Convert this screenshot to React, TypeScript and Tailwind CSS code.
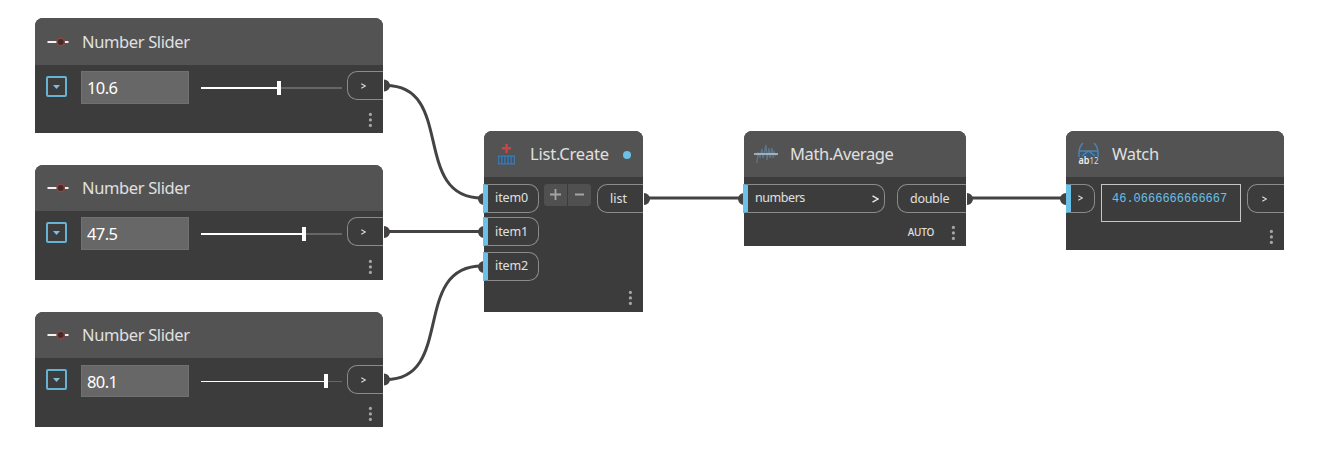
import React from "react";
import clsx from "clsx";

type NodeProps = {
  title: string;
  icon: React.ReactNode;
  place: string;
  header?: string;
  titleStyle?: string;
  badge?: boolean;
  children: React.ReactNode;
};

function GraphNode({ title, icon, place, header = "h-[46px]", titleStyle = "", badge, children }: NodeProps) {
  return (
    <section className={clsx("absolute flex flex-col overflow-hidden rounded-t-lg bg-[#3c3c3c] text-[#e0e0e0]", place)}>
      <header className={clsx("flex shrink-0 items-center bg-[#535353]", header)}>
        {icon}
        <h2 className={clsx("whitespace-nowrap text-[16.5px] leading-none", titleStyle)}>{title}</h2>
        {badge && <span className="ml-auto mr-3 mt-0.5 size-2 rounded-full bg-[#6ac0e7]" />}
      </header>
      {children}
    </section>
  );
}

function Dots({ className = "" }: { className?: string }) {
  return (
    <svg className={clsx("h-4 w-1 shrink-0", className)} viewBox="0 0 4 16" fill="#a6a6a6">
      <circle cx="2.4" cy="2.4" r="1.6" />
      <circle cx="2.4" cy="7.9" r="1.6" />
      <circle cx="2.4" cy="13.4" r="1.6" />
    </svg>
  );
}

function InputPort({ children, className }: { children: React.ReactNode; className: string }) {
  return (
    <div className={clsx("flex h-[29px] shrink-0 items-center rounded-r-[10px] border border-[#8b8b8b] border-l-[#6ac0e7] text-[12.5px] leading-none", className)}>
      {children}
    </div>
  );
}

function OutputPort({ children, className }: { children: React.ReactNode; className: string }) {
  return (
    <div className={clsx("flex h-[29px] shrink-0 items-center rounded-l-[10px] border border-r-0 border-[#8b8b8b] text-[12.5px] leading-none", className)}>
      {children}
    </div>
  );
}

function Chevron({ large = false }: { large?: boolean }) {
  return large ? (
    <svg className="mt-0.5 h-2 w-[7px]" viewBox="0 0 7 8" fill="none" stroke="#e8e8e8" strokeWidth="1.4">
      <path d="M.5 .8 6 4 .5 7.2" />
    </svg>
  ) : (
    <svg className="h-1.5 w-[5px]" viewBox="0 0 5 6" fill="none" stroke="#e0e0e0" strokeWidth="1.1">
      <path d="M.3 .7 4.5 3 .3 5.3" />
    </svg>
  );
}

const sliderIcon = (
  <svg className="ml-3 mr-[13px] h-3 w-[22px] shrink-0" viewBox="0 0 22 12">
    <path d="M.5 6h21" stroke="#f2f2f2" strokeWidth="2.2" />
    <circle cx="13.7" cy="6" r="3.7" fill="#442c2c" stroke="#92463f" strokeWidth="1.4" />
  </svg>
);

const listIcon = (
  <svg className="ml-3.5 mr-[15px] h-[22px] w-[17px] shrink-0" viewBox="0 0 17 22" fill="none">
    <path d="M0 13h17v8H0z" fill="#46525e" />
    <path d="M8.5 1v9M4 5.3h9" stroke="#c94545" strokeWidth="2.4" />
    <path d="M0 13.2h17M0 20.8h17M.7 13v8M3.8 13v8M6.9 13v8M10.1 13v8M13.2 13v8M16.3 13v8" stroke="#397cb8" strokeWidth="1.2" />
  </svg>
);

const averageIcon = (
  <svg className="ml-2.5 mr-3 h-5 w-6 shrink-0" viewBox="0 0 24 20" fill="none">
    <path d="M3 19 4 8 6 13 8 5 9 14 12 1 13 16 15 4 16 14 18 4 19 14 20 8 22 12" stroke="#5d7488" strokeWidth="1.4" />
    <path d="M0 10h24" stroke="#bac7ce" strokeWidth="1.6" />
  </svg>
);

const watchIcon = (
  <svg className="ml-3 mr-[13px] h-[24px] w-[21px] shrink-0 overflow-visible" viewBox="0 0 21 24" fill="none">
    <path d="M2 9h17v7H2z" fill="#3d5871" />
    <path d="M5 1C2 4 1 7 1 11v4M16 1c3 3 4 6 4 10v4M1 9h19M4 14l6.5-5L17 14" stroke="#4f82ae" strokeWidth="1.5" />
    <text x="0.5" y="21.5" fill="#eeeeee" fontFamily="Noto Sans" fontSize="10" fontWeight="600" textLength="11" lengthAdjust="spacingAndGlyphs">ab</text>
    <text x="11.5" y="21.5" fill="#dddddd" fontFamily="Noto Sans" fontSize="9" textLength="9" lengthAdjust="spacingAndGlyphs">12</text>
  </svg>
);

type SliderProps = {
  value: string;
  place: string;
  header?: string;
  titleStyle?: string;
  input?: string;
  port?: string;
  dots?: string;
  filled: string;
  trackHeight?: string;
};

function NumberSlider({ value, place, header, titleStyle, input = "h-[33px]", port, dots = "bottom-[5.5px]", filled, trackHeight = "h-0.5" }: SliderProps) {
  return (
    <GraphNode
      title="Number Slider"
      icon={sliderIcon}
      place={clsx("left-[35px] h-[115px] w-[348px]", place)}
      header={header}
      titleStyle={clsx("tracking-[-0.37px]", titleStyle)}
    >
      <div className="flex items-start pt-1.5">
        <button className="ml-[11px] mt-[5px] flex size-[21px] shrink-0 items-center justify-center rounded-[2px] border-2 border-[#67b3d5]" aria-label="Expand">
          <svg className="h-1 w-[7px]" viewBox="0 0 7 4" fill="#82bcdf"><path d="M0 0h7L3.5 4z" /></svg>
        </button>
        <div className={clsx("ml-3.5 flex w-[108px] shrink-0 items-center border border-[#707070] bg-[#676767] pl-[5px] pt-0.5 text-[16.5px] leading-none tracking-[-0.6px] text-white", input)}>
          {value}
        </div>
        <div className="ml-3 mt-[10px] flex h-3.5 w-[141px] shrink-0 items-center">
          <span className={clsx("shrink-0 bg-white", trackHeight, filled)} />
          <span className="h-3.5 w-1 shrink-0 bg-white" />
          <span className={clsx("grow bg-[#666666]", trackHeight)} />
        </div>
        <OutputPort className={clsx("ml-[5px] w-9 pl-[13px]", port)}><Chevron /></OutputPort>
      </div>
      <Dots className={clsx("absolute right-[11px]", dots)} />
    </GraphNode>
  );
}

export default function App() {
  return (
    <main className="relative h-[458px] w-[1328px] overflow-hidden bg-white font-['Noto_Sans',sans-serif]">
      <svg className="absolute inset-0 h-full w-full" viewBox="0 0 1328 458" fill="none">
        <g stroke="#444242" strokeWidth="3">
          <path d="M386 85.5C455 85.5 411 198 482 198" />
          <path d="M386 231.5H482" />
          <path d="M386 379.5C455 379.5 411 266 482 266" />
          <path d="M645 198H742" />
          <path d="M968 198H1065" />
        </g>
        <g fill="#444242">
          <path d="M384 79.5a6 6 0 0 1 0 12zM384 226a6 6 0 0 1 0 12zM384 373.5a6 6 0 0 1 0 12zM644 193a6 6 0 0 1 0 12zM967 193a6 6 0 0 1 0 12z" />
          <path d="M484 193a6 6 0 0 0 0 12zM484 226a6 6 0 0 0 0 12zM484 261a6 6 0 0 0 0 12zM744 193a6 6 0 0 0 0 12zM1066 193a6 6 0 0 0 0 12z" />
        </g>
        <path d="M483 184h1v29h-1zM483 217h1v29h-1zM483 252h1v29h-1zM743 184h1v29h-1z" fill="#6ac0e7" />
      </svg>

      <NumberSlider value="10.6" place="top-[18px]" header="h-[47px]" titleStyle="pt-0.5" dots="bottom-[5px]" filled="w-[76px]" />
      <NumberSlider value="47.5" place="top-[165px]" filled="w-[101px]" />
      <NumberSlider value="80.1" place="top-[312px]" input="mt-px h-8" port="mt-px" filled="w-[123px]" trackHeight="h-px" />

      <GraphNode title="List.Create" icon={listIcon} titleStyle="tracking-[-0.2px]" place="left-[484px] top-[131px] h-[181px] w-[159px]" badge>
        <div className="flex items-start pt-[7px]">
          <div className="flex flex-col">
            <InputPort className="w-[55px] border-l-4 pl-[7px] tracking-[-0.1px]">item0</InputPort>
            <InputPort className="mt-1 w-[55px] border-l-4 pl-[7px] pt-px tracking-[-0.1px]">item1</InputPort>
            <InputPort className="mt-1.5 w-[55px] border-l-4 pb-px pl-[7px] tracking-[-0.1px]">item2</InputPort>
          </div>
          <div className="ml-[5px] flex gap-px">
            <button className="flex h-[22px] w-[23px] items-center justify-center rounded-l-[3px] bg-[#505050] pb-0.5" aria-label="Add item">
              <svg className="size-[11px]" viewBox="0 0 11 11" stroke="#a5a5a5" strokeWidth="1.8"><path d="M5.5 0v11M0 5.5h11" /></svg>
            </button>
            <button className="flex h-[22px] w-[23px] items-center justify-center rounded-r-[3px] bg-[#505050] pb-0.5" aria-label="Remove item">
              <svg className="size-[9px]" viewBox="0 0 9 9" stroke="#a5a5a5" strokeWidth="1.8"><path d="M0 4.5h9" /></svg>
            </button>
          </div>
          <OutputPort className="ml-auto w-[46px] pl-3 pt-px">list</OutputPort>
        </div>
        <Dots className="absolute bottom-1.5 right-[11px]" />
      </GraphNode>

      <GraphNode title="Math.Average" icon={averageIcon} titleStyle="tracking-[-0.4px]" place="left-[744px] top-[131px] h-[115px] w-[222px]">
        <div className="flex justify-between pt-[7px]">
          <InputPort className="w-[141px] justify-between border-l-4 pb-px pl-[7px] pr-[5px] tracking-[-0.45px]">numbers <Chevron large /></InputPort>
          <OutputPort className="w-[69px] pl-3 pt-px tracking-[-0.3px]">double</OutputPort>
        </div>
        <div className="flex items-center justify-end pr-[11px] pt-3 text-[10px] font-medium leading-none">
          <span className="mr-[17px] -mt-0.5 tracking-[-0.25px]">AUTO</span>
          <Dots />
        </div>
      </GraphNode>

      <GraphNode title="Watch" icon={watchIcon} titleStyle="tracking-[-0.3px]" place="left-[1066px] top-[131px] h-[119px] w-[218px]">
        <div className="flex items-start justify-between pt-[7px]">
          <InputPort className="w-[29px] border-l-[5px] pb-0.5 pl-[7px]"><Chevron /></InputPort>
          <div className="h-[38px] w-[140px] border border-[#c5c5c5] pl-2.5 pt-2 font-['Liberation_Mono',monospace] text-[12px] leading-none text-[#6ac0e7]">
            46.0666666666667
          </div>
          <OutputPort className="w-[37px] pl-3.5"><Chevron /></OutputPort>
        </div>
        <Dots className="absolute bottom-[5px] right-[11px]" />
      </GraphNode>
    </main>
  );
}
